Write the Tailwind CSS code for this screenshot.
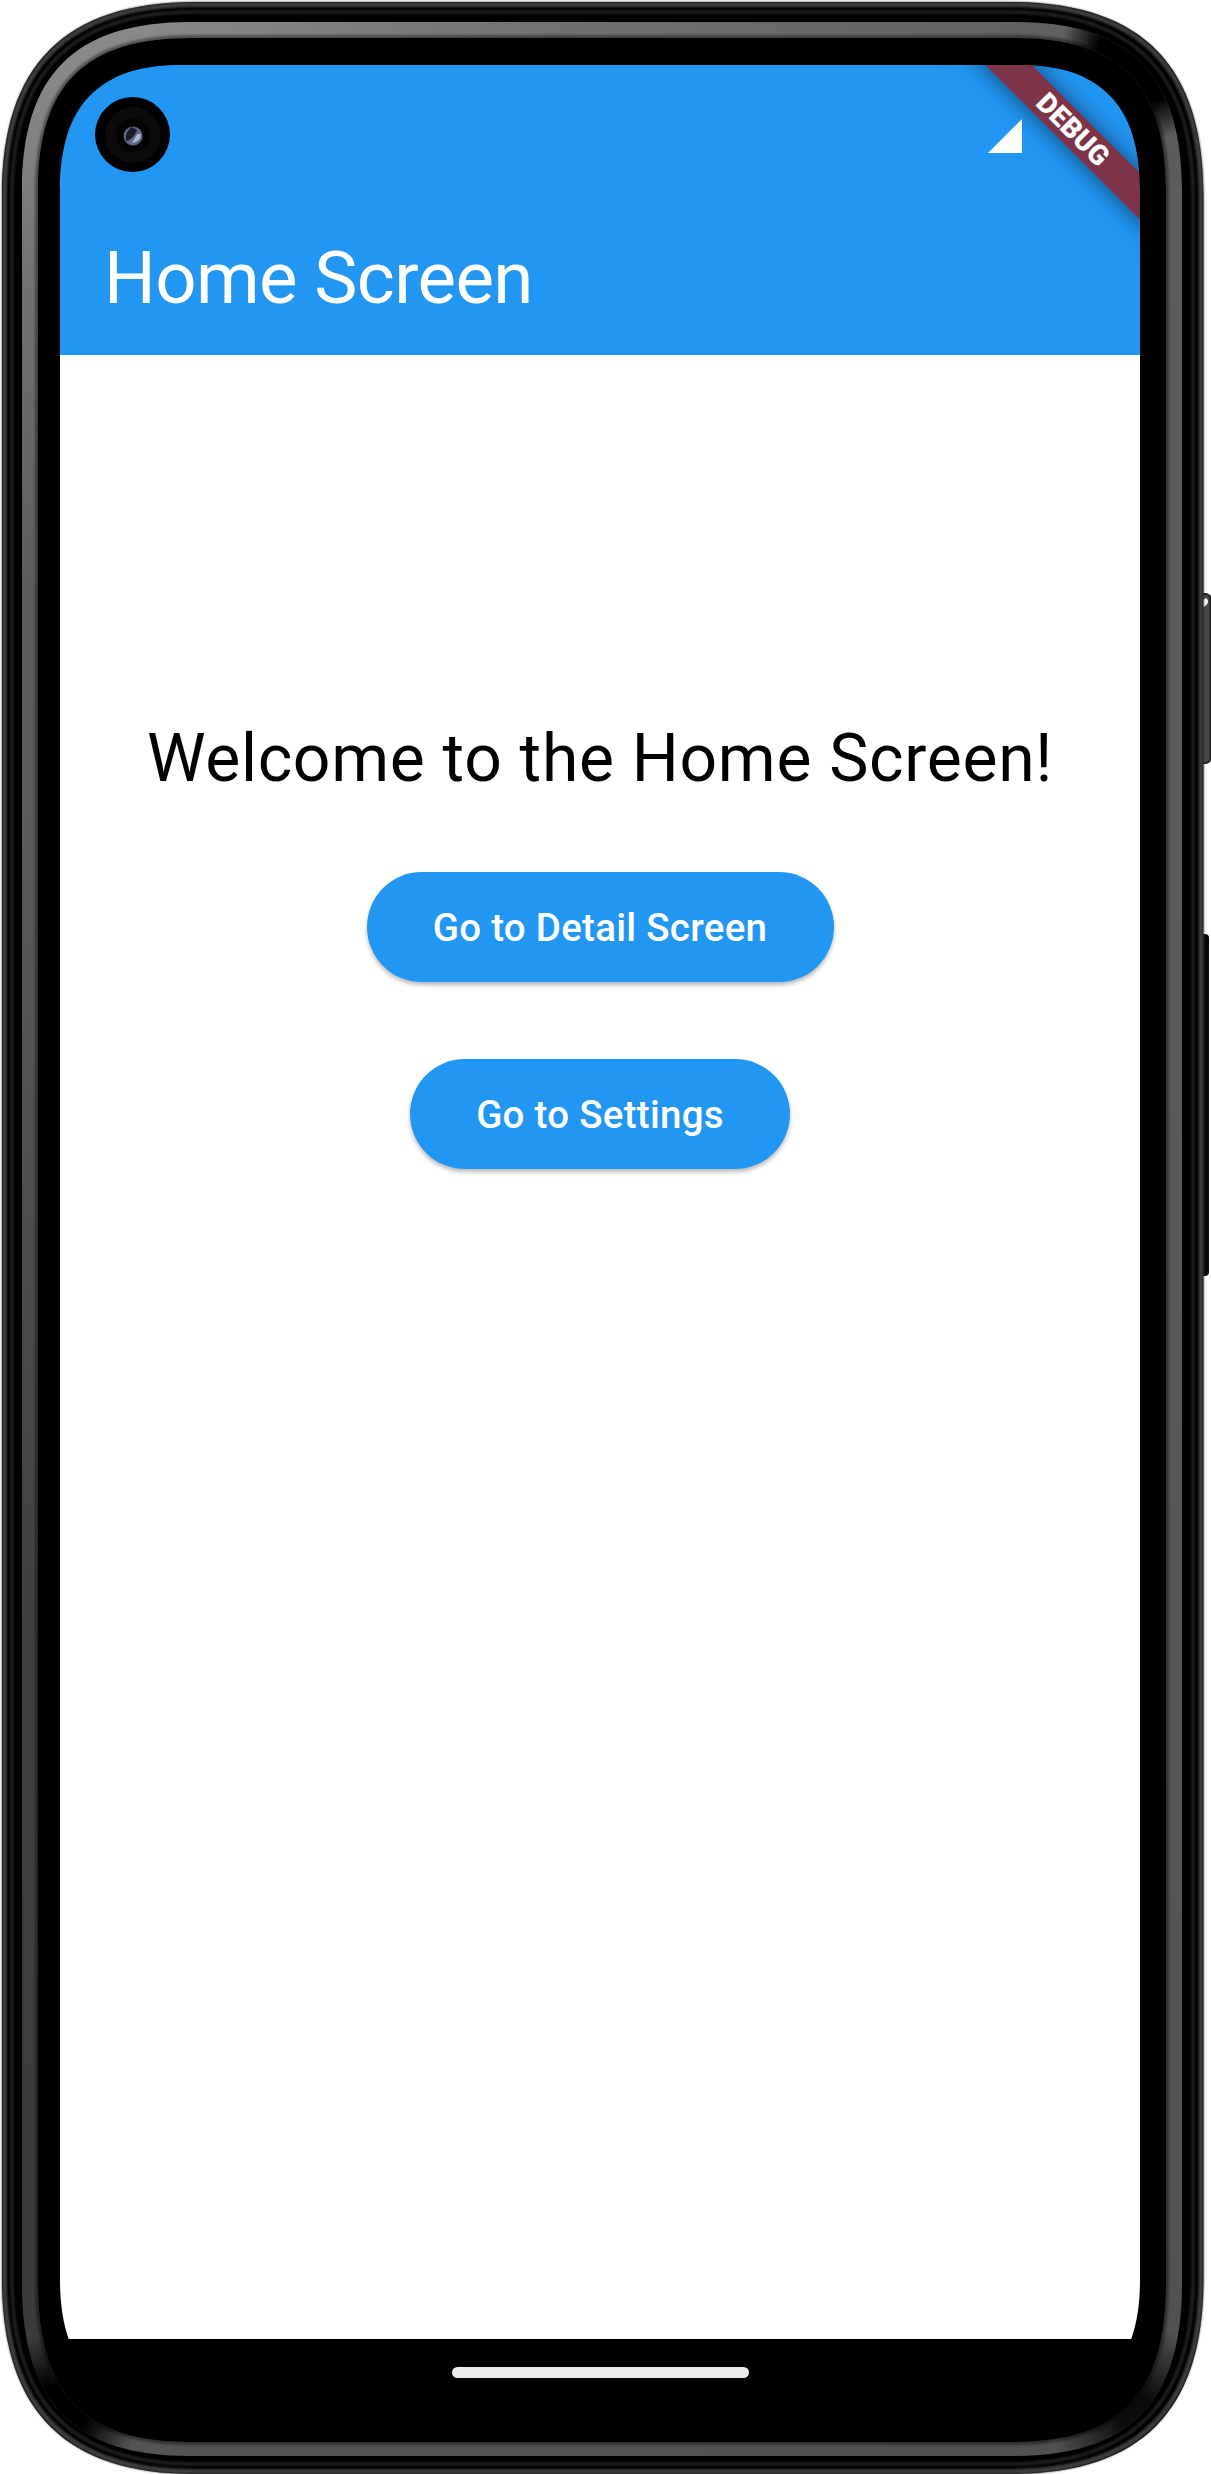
<!DOCTYPE html>
<html lang="en">
<head>
<meta charset="utf-8">
<title>Home Screen</title>
<script src="https://cdn.jsdelivr.net/npm/@tailwindcss/browser@4"></script>
</head>
<body class="bg-white">
<div class="relative flex h-[2474px] w-[1211px] overflow-hidden pl-[60px] pt-[65px] font-['Roboto',sans-serif]">
  <main class="relative flex h-[2340px] w-[1080px] flex-col overflow-hidden bg-white">
    <header class="flex h-[290px] shrink-0 flex-col bg-[#2196f3]">
      <div class="flex h-[136px] justify-end pr-[118px] pt-[54px]">
        <svg class="h-[34px] w-[34px]" viewBox="0 0 34 34"><path d="M34 0V34H0Z" fill="#fff"/></svg>
      </div>
      <h1 class="flex h-[154px] items-center pt-[2px] pl-11 text-[72.6px] leading-none font-normal tracking-[-0.6px] text-white">Home Screen</h1>
    </header>
    <section class="flex grow flex-col items-center pt-[358px]">
      <p class="text-[66px] leading-[92px] tracking-[0.7px] whitespace-nowrap text-black">Welcome to the Home Screen!</p>
      <button class="mt-[67px] flex h-[110px] w-[467px] items-center justify-center rounded-full bg-[#2196f3] pt-[2px] text-[38.5px] font-medium tracking-[0.275px] text-white shadow-[0_3px_4px_rgba(0,0,0,0.28)]">Go to Detail Screen</button>
      <button class="mt-[77px] flex h-[110px] w-[380px] items-center justify-center rounded-full bg-[#2196f3] pt-[2px] text-[38.5px] font-medium tracking-[0.275px] text-white shadow-[0_3px_4px_rgba(0,0,0,0.28)]">Go to Settings</button>
    </section>
    <nav class="flex h-[66px] shrink-0 items-center justify-center bg-black">
      <div class="h-[11px] w-[297px] rounded-full bg-[#ebebeb]"></div>
    </nav>
    <div class="absolute top-[48px] left-[863px] flex h-[33px] w-[300px] rotate-45 items-center justify-center bg-[#7d3449] text-[28px] leading-none font-black text-white shadow-[0_0_24px_rgba(0,0,0,0.5)]">DEBUG</div>
  </main>
  <svg class="absolute top-0 left-0 h-[2474px] w-[1211px]" viewBox="0 0 1211 2474" fill="none">
    <defs>
      <linearGradient id="rim" x1="0" y1="0" x2="1211" y2="2474" gradientUnits="userSpaceOnUse">
        <stop offset="0" stop-color="#949494"/><stop offset=".1" stop-color="#707070"/><stop offset=".2" stop-color="#5c5c5c"/><stop offset=".5" stop-color="#5a5a5a"/><stop offset="1" stop-color="#505050"/>
      </linearGradient>
      <linearGradient id="shadeL" x1="0" y1="800" x2="0" y2="2474" gradientUnits="userSpaceOnUse"><stop offset="0" stop-opacity="0"/><stop offset=".5" stop-opacity=".3"/><stop offset="1" stop-opacity=".3"/></linearGradient>
      <radialGradient id="shadeTR" cx="1145" cy="55" r="85" gradientUnits="userSpaceOnUse"><stop offset=".55"/><stop offset="1" stop-opacity="0"/></radialGradient>
      <radialGradient id="shadeBL" cx="58" cy="2414" r="80" gradientUnits="userSpaceOnUse"><stop offset=".35"/><stop offset="1" stop-opacity="0"/></radialGradient>
      <radialGradient id="shadeBR" cx="1138" cy="2414" r="90" gradientUnits="userSpaceOnUse"><stop offset=".2" stop-opacity=".85"/><stop offset="1" stop-opacity="0"/></radialGradient>
      <clipPath id="band"><path clip-rule="evenodd" d="M22 190C22 75 75 22 190 22H1015C1130 22 1182 75 1182 190V2284C1182 2403 1129 2456 1014 2456H190C75 2456 22 2403 22 2284ZM38 190C38 85 85 38 190 38H1015C1120 38 1166 85 1166 190V2284C1166 2395 1119 2442 1014 2442H190C85 2442 38 2395 38 2284Z"/></clipPath>
      <filter id="soft" x="-5%" y="-5%" width="110%" height="110%"><feGaussianBlur stdDeviation=".8"/></filter>
    </defs>
    <rect x="1198" y="594" width="12.500" height="169" rx="5" fill="#484848" stroke="#1c1c1c" stroke-width="2"/>
    <path d="M1203 600q4-4 5 1q0 4-5 6z" fill="#fff"/>
    <rect x="1199" y="934" width="10" height="342" rx="4" fill="#070707"/>
    <path fill="#000" fill-rule="evenodd" d="M2 195C2 65 65 2 195 2H1010C1142 2 1203.500 65 1203.500 195V2279C1203.500 2411 1142 2474 1010 2474H195C65 2474 2 2411 2 2279ZM60 190C60 105 100 65 180 65H1020C1100 65 1140 105 1140 190V2280C1140 2365 1100 2405 1020 2405H180C100 2405 60 2365 60 2280Z"/>
    <path d="M4.500 195C4.500 67 67 4.500 195 4.500H1009C1139 4.500 1201 67 1201 195V2279C1201 2408 1139 2471.500 1009 2471.500H195C67 2471.500 4.500 2408 4.500 2279Z" stroke="#3c3c3c" stroke-width="5" filter="url(#soft)"/>
    <path d="M12 195C12 72 72 12 195 12H1009C1132 12 1193 72 1193 195V2279C1193 2403 1132 2464 1009 2464H195C72 2464 12 2403 12 2279Z" stroke="#222" stroke-width="3.500" filter="url(#soft)"/>
    <g clip-path="url(#band)">
      <rect x="20" y="20" width="1165" height="2440" fill="url(#rim)"/>
      <rect x="20" y="800" width="30" height="1674" fill="url(#shadeL)"/>
      <rect x="1050" y="0" width="161" height="160" fill="url(#shadeTR)"/>
      <rect x="0" y="2320" width="160" height="154" fill="url(#shadeBL)"/>
      <rect x="1040" y="2320" width="171" height="154" fill="url(#shadeBR)"/>
      <path d="M38 190C38 85 85 38 190 38H1015C1120 38 1166 85 1166 190V2284C1166 2395 1119 2442 1014 2442H190C85 2442 38 2395 38 2284Z" stroke="#000" stroke-opacity=".4" stroke-width="6" filter="url(#soft)"/>
    </g>
    <circle cx="132.500" cy="134.500" r="37.500" fill="#000"/>
    <circle cx="133" cy="135" r="28" fill="#0b0b0b"/>
    <circle cx="133" cy="135" r="17" fill="#030303"/>
    <circle cx="133" cy="136" r="9.500" fill="#5b6785"/>
    <path d="M126 141Q134 139 137 130L132 127Q125 131 126 141Z" fill="#1b1b2b"/>
    <path d="M132 143Q141 142 141 134Q138 133 136 136Z" fill="#a9b7d6"/>
  </svg>
</div>
</body>
</html>
